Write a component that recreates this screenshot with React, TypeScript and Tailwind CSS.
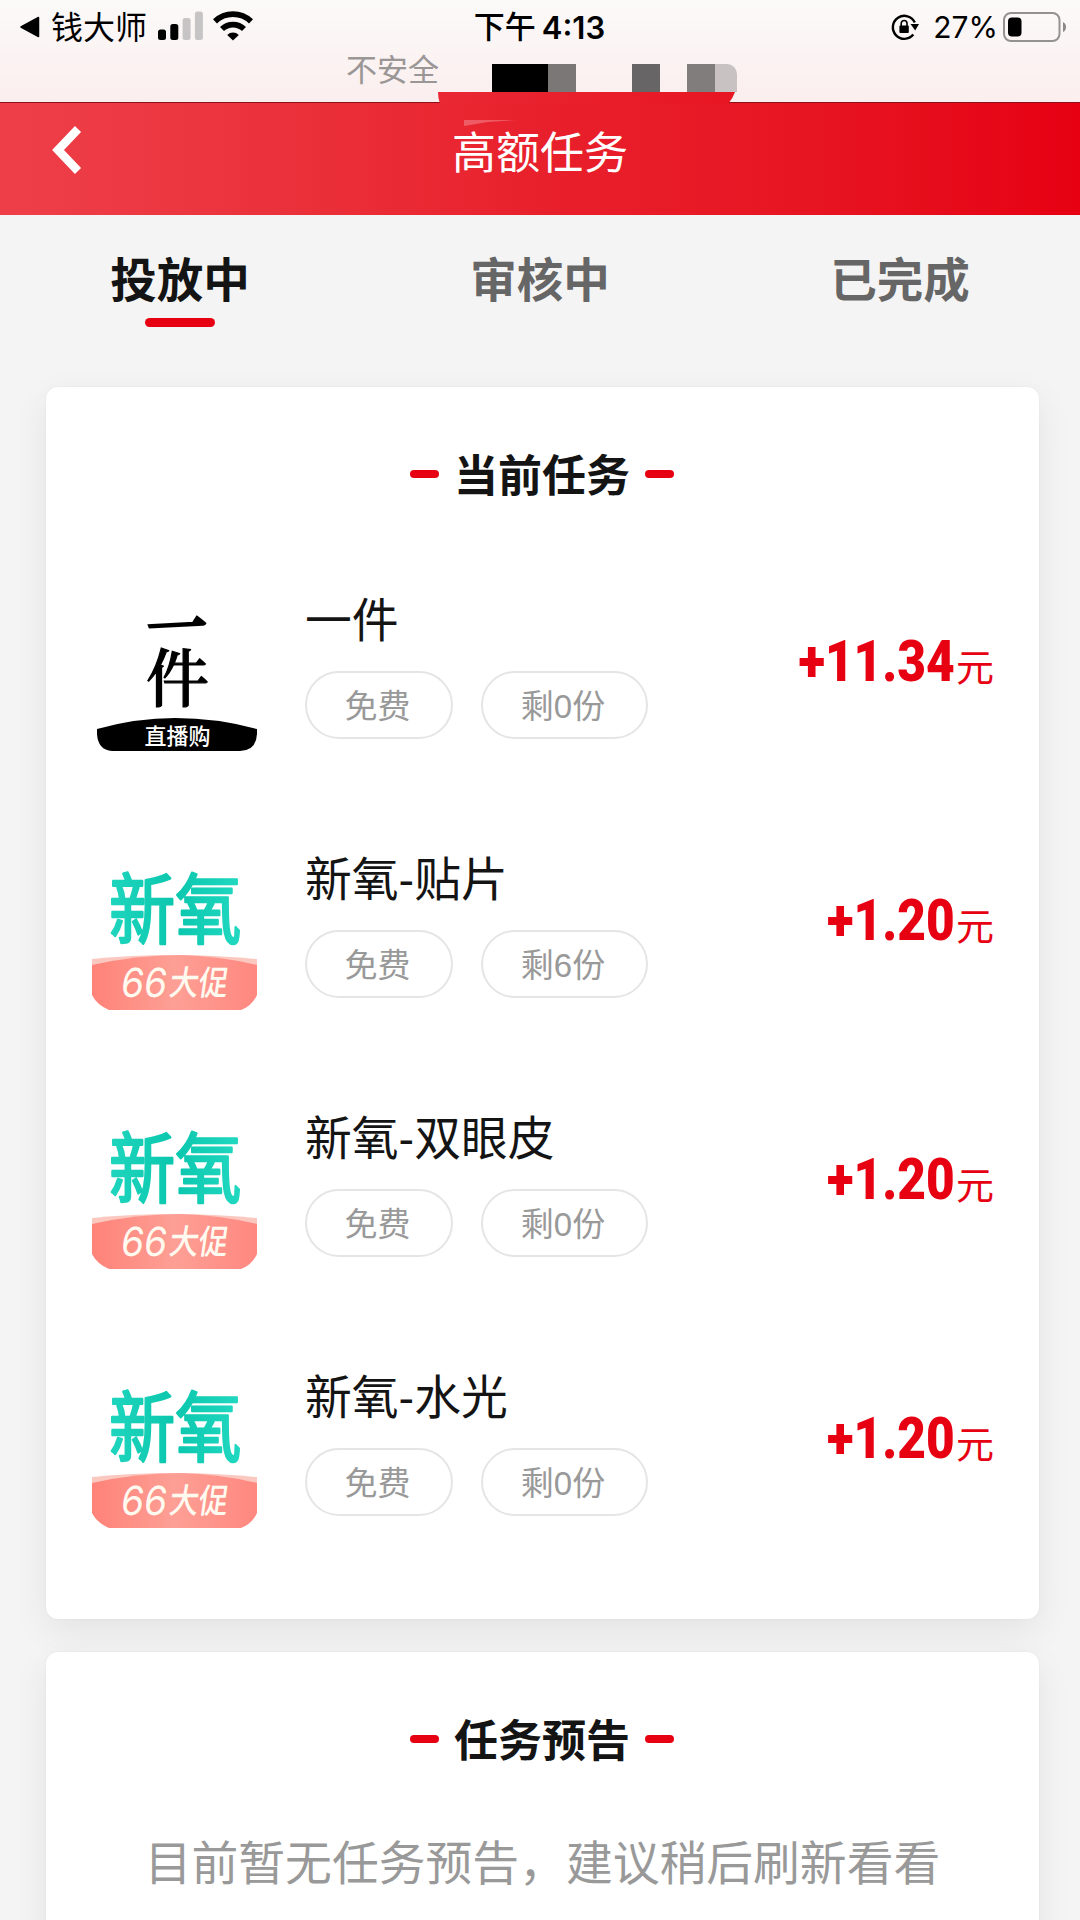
import type { ReactNode } from "react";
import clsx from "clsx";

type Task = {
  id: number;
  name: string;
  left: number;
  price: string;
  logo: "yijian" | "xinyang";
};

const tasks: Task[] = [
  { id: 1, name: "一件", left: 0, price: "11.34", logo: "yijian" },
  { id: 2, name: "新氧-贴片", left: 6, price: "1.20", logo: "xinyang" },
  { id: 3, name: "新氧-双眼皮", left: 0, price: "1.20", logo: "xinyang" },
  { id: 4, name: "新氧-水光", left: 0, price: "1.20", logo: "xinyang" },
];

const tabs = ["投放中", "审核中", "已完成"];

const SignalIcon = () => (
  <svg width="45" height="30" viewBox="0 0 45 30">
    <rect x="0" y="18.5" width="8" height="10.5" rx="2.5" />
    <rect x="12.3" y="13" width="8" height="16" rx="2.5" />
    <rect x="24.6" y="7" width="8" height="22" rx="2.5" fill="#c6c4c4" />
    <rect x="36.9" y="0.5" width="8" height="28.5" rx="2.5" fill="#c6c4c4" />
  </svg>
);

const WifiIcon = () => (
  <svg width="40" height="30" viewBox="0 0 40 30" fill="none" stroke="#000" strokeWidth="5.8">
    <path d="M2 10.4 A26 26 0 0 1 38 10.4" />
    <path d="M9 18 A16 16 0 0 1 31 18" />
    <path d="M14.2 24 A8.2 8.2 0 0 1 25.8 24 L20 29.6 Z" fill="#000" stroke="none" />
  </svg>
);

const RotationLockIcon = () => (
  <svg width="28" height="28" viewBox="0 0 28 28" fill="none" stroke="#000">
    <path d="M23.8 9.5 A11.5 11.5 0 1 0 22.3 21.6" strokeWidth="2.4" />
    <path d="M19.5 11 L28 11 L24.2 17.6 Z" fill="#000" stroke="none" />
    <rect x="8.4" y="12.6" width="9.4" height="7.4" rx="1" fill="#000" stroke="none" />
    <path d="M10.2 13 V10.4 A2.9 2.9 0 0 1 16 10.4 V13" strokeWidth="1.6" />
  </svg>
);

const BatteryIcon = () => (
  <svg width="64" height="30" viewBox="0 0 64 30">
    <rect x="1" y="1" width="55.5" height="28" rx="7" fill="none" stroke="#949191" strokeWidth="2" />
    <rect x="5" y="5.5" width="13.5" height="19" rx="4" />
    <path d="M60 10 Q63 11.5 63 15 Q63 18.5 60 20 Z" fill="#8a8787" />
  </svg>
);

const YijianLogo = () => (
  <svg
    className="overflow-visible"
    width="166"
    height="166"
    viewBox="0 0 166 166"
    fontFamily="'Noto Serif CJK SC','Noto Sans CJK SC',serif"
  >
    <g textAnchor="middle" fontWeight="500" stroke="#000">
      <text transform="rotate(-3 85 25)" x="85" y="50" fontSize="61" strokeWidth="2.5">一</text>
      <text x="85.5" y="101" fontSize="63" strokeWidth="1.2">件</text>
    </g>
    <path d="M5 129 Q44 118 83 118 Q125 118 165 129 V134 Q164 151 148 151 H20 Q6 150 5 134 Z" />
    <text x="85.5" y="144" fontSize="22" textAnchor="middle" fontWeight="500" fill="#fff" fontFamily="'Noto Sans CJK SC',sans-serif">直播购</text>
  </svg>
);

const XinyangLogo = () => (
  <svg className="overflow-visible" width="166" height="166" viewBox="0 0 166 166" fontFamily="'Noto Sans CJK SC',sans-serif">
    <defs>
      <linearGradient id="teal" x1="0" x2="1">
        <stop offset="0" stopColor="#1fd5bd" />
        <stop offset="0.5" stopColor="#0bc7ae" />
        <stop offset="1" stopColor="#22d8c1" />
      </linearGradient>
      <linearGradient id="coral" x1="0" x2="1">
        <stop offset="0" stopColor="#ff8278" />
        <stop offset="0.5" stopColor="#fd9f95" />
        <stop offset="1" stopColor="#ff8880" />
      </linearGradient>
    </defs>
    <text
      transform="translate(17 79) scale(0.86 1)"
      fontSize="77"
      fontWeight="400"
      fill="url(#teal)"
      stroke="url(#teal)"
      strokeWidth="2.4"
      strokeLinejoin="round"
    >
      新氧
    </text>
    <path d="M0 100 Q80 92 165 100 V113 H0 Z" fill="#fbc8c0" />
    <path d="M0 106 Q45 96 88 96 Q128 97 165 106 V136 Q160 147 149 151 H17 Q5 146 0 136 Z" fill="url(#coral)" />
    <g transform="skewX(-8)" fill="#fffaf0">
      <text x="47" y="138" fontSize="40" fontFamily="Inter,sans-serif" fontWeight="400" textLength="46" lengthAdjust="spacingAndGlyphs">66</text>
      <text x="95" y="136" fontSize="34" fontWeight="500" textLength="59" lengthAdjust="spacingAndGlyphs">大促</text>
    </g>
  </svg>
);

const StatusBar = () => (
  <div className="relative h-[102px] bg-linear-to-b from-[#fbfaf9] to-[#fbeeee] text-black">
    <div className="grid h-[54px] grid-cols-[1fr_auto_1fr] items-center">
      <div className="flex items-center pl-5">
        <svg width="20" height="22" viewBox="0 0 20 22">
          <path d="M1 11 L18.5 1.5 V20.5 Z" stroke="#000" strokeWidth="1.5" strokeLinejoin="round" />
        </svg>
        <span className="ml-[11px] mt-[2px] text-[32px] leading-none">钱大师</span>
        <div className="ml-[11px] mt-[-2px]">
          <SignalIcon />
        </div>
        <div className="ml-[10px] mt-[-3px]">
          <WifiIcon />
        </div>
      </div>
      <div className="flex items-center gap-[6px] pr-px text-[31px] leading-none font-medium">
        <span className="mt-px">下午</span>
        <span className="font-[Inter] font-semibold">4:13</span>
      </div>
      <div className="flex items-center justify-end pr-[13px]">
        <RotationLockIcon />
        <span className="ml-[14px] mr-[5px] font-[Inter] text-[30px] leading-none">27%</span>
        <BatteryIcon />
      </div>
    </div>
    <div className="pt-px pl-[346px] text-[31px] leading-[32px] text-[#9a9696]">不安全</div>

    {/* pixelated address strip that hangs over the navigation bar */}
    <div className="absolute top-16 left-[492px] flex h-7">
      <div className="w-14 bg-black" />
      <div className="w-7 bg-[#7a7776]" />
      <div className="ml-14 w-7 bg-[#686566]" />
      <div className="ml-[27px] w-7 bg-[#807d7c]" />
      <div className="w-[22px] rounded-tr-[10px] bg-[#c8c2c3]" />
    </div>
    <svg className="absolute top-[92px] left-[438px] z-10" width="298" height="12" viewBox="0 0 298 12">
      <defs>
        <linearGradient id="strip">
          <stop offset="0" stopColor="#e92834" />
          <stop offset="1" stopColor="#e81522" />
        </linearGradient>
      </defs>
      <path d="M0 0 H297 Q295 6 290 12 H2 Q0 6 0 0 Z" fill="url(#strip)" />
    </svg>
  </div>
);

const NavBar = () => (
  <header className="relative flex h-[113px] items-center justify-center border-t border-[#8d1119] bg-linear-to-r from-[#ee3f49] via-[#e8202c] to-[#e60012]">
    <svg className="absolute top-[22px] left-[51px]" width="32" height="50" viewBox="0 0 32 50">
      <path d="M27 4 L7 25 L27 46" fill="none" stroke="#fff" strokeWidth="8.5" />
    </svg>
    <svg className="absolute top-[17px] left-[464px]" width="52" height="6" viewBox="0 0 52 6">
      <path d="M0 0 H52 L24 2 L0 6 Z" fill="#fff" opacity="0.25" />
    </svg>
    <h1 className="mt-[-11px] text-[44px] leading-none text-white">高额任务</h1>
  </header>
);

const Card = ({ title, className, children }: { title: string; className?: string; children: ReactNode }) => (
  <section
    className={clsx(
      "ml-[46px] w-[993px] rounded-xl bg-white shadow-[0_12px_36px_rgba(0,0,0,0.07),0_0_3px_rgba(0,0,0,0.05)]",
      className
    )}
  >
    <div className="flex h-[174px] items-center justify-center gap-[15px] pr-px">
      <i className="h-2 w-[29px] rounded-full bg-[#e60012]" />
      <h2 className="mt-[5px] text-[44px] leading-none font-bold text-[#141414]">{title}</h2>
      <i className="h-2 w-[29px] rounded-full bg-[#e60012]" />
    </div>
    {children}
  </section>
);

const Tag = ({ children, className }: { children: ReactNode; className: string }) => (
  <span
    className={clsx(
      "flex h-[68px] items-center justify-center rounded-full border-2 border-[#e5e5e5] pr-[3px] pt-[3px] text-[33px] leading-none text-[#999]",
      className
    )}
  >
    {children}
  </span>
);

const TaskRow = ({ task }: { task: Task }) => (
  <li className="flex h-[259px] pl-[46px] pr-[45px]">
    <div className="mt-[39px] h-[166px] w-[166px]">
      {task.logo === "yijian" ? <YijianLogo /> : <XinyangLogo />}
    </div>
    <div className="ml-[47px] flex-1">
      <h3 className="mt-[35px] text-[46.8px] leading-[50px] text-[#141414]">{task.name}</h3>
      <div className="mt-[25px] flex gap-[28px]">
        <Tag className="w-[148px]">免费</Tag>
        <Tag className="w-[167px]">剩{task.left}份</Tag>
      </div>
    </div>
    <div className="mt-[71px] flex h-[60px] items-baseline text-[#e60012]">
      <span className="origin-right scale-x-[0.87] font-[Roboto] text-[57px] leading-[60px] font-black">
        +{task.price}
      </span>
      <span className="ml-[1px] text-[38px] leading-none">元</span>
    </div>
  </li>
);

export default function App() {
  return (
    <div className="h-[1920px] w-[1080px] overflow-hidden bg-[#f4f4f4] font-['Liberation_Sans','Noto_Sans_CJK_SC',sans-serif]">
      <StatusBar />
      <NavBar />
      <nav className="grid h-[172px] grid-cols-3 pt-[40px]">
        {tabs.map((tab, i) => (
          <div key={tab} className="flex flex-col items-center">
            <span className={clsx("text-[46.5px] leading-[52px] font-bold", i === 0 ? "text-[#141414]" : "text-[#666]")}>
              {tab}
            </span>
            {i === 0 && <i className="mt-[11px] h-[9px] w-[70px] rounded-full bg-[#e60012]" />}
          </div>
        ))}
      </nav>
      <Card title="当前任务" className="h-[1232px]">
        <ul>
          {tasks.map((task) => (
            <TaskRow key={task.id} task={task} />
          ))}
        </ul>
      </Card>
      <Card title="任务预告" className="mt-[33px] h-[400px]">
        <p className="pt-[13px] text-center text-[46.8px] leading-[50px] text-[#999]">目前暂无任务预告，建议稍后刷新看看</p>
      </Card>
    </div>
  );
}
